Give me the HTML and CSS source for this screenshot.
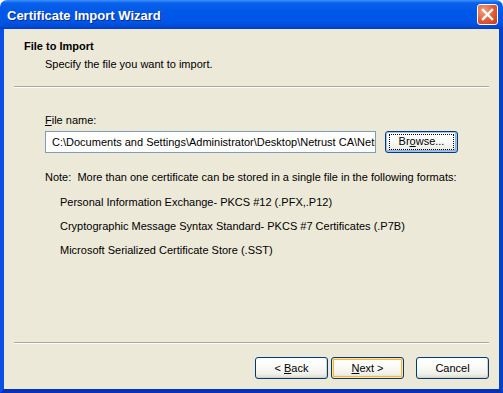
FILE: index.html
```html
<!doctype html>
<html>
  <head>
    <title>Certificate Import Wizard</title>
    <link rel="stylesheet" href="styles.css">
  </head>
  <body>
    <div class="window">
      <div class="titlebar">
        <span class="title">Certificate Import Wizard</span>
        <button class="close" aria-label="Close">
          <svg width="13" height="13" viewBox="0 0 13 13">
            <path d="M2 2 L11 11 M11 2 L2 11" stroke="#fff" stroke-width="2.4" stroke-linecap="square"/>
          </svg>
        </button>
      </div>
      <div class="frame">
        <div class="header">
          <div class="heading">File to Import</div>
          <div class="subheading">Specify the file you want to import.</div>
        </div>
        <div class="rule"></div>
        <div class="content">
          <label class="field-label" for="file"><u>F</u>ile name:</label>
          <div class="file-row">
            <input id="file" class="file-input" type="text" value="C:\Documents and Settings\Administrator\Desktop\Netrust CA\Netrust.pfx">
            <button class="btn btn-default"><span class="focus">Br<u>o</u>wse...</span></button>
          </div>
          <p class="note">Note:&nbsp; More than one certificate can be stored in a single file in the following formats:</p>
          <ul class="formats">
            <li>Personal Information Exchange- PKCS #12 (.PFX,.P12)</li>
            <li>Cryptographic Message Syntax Standard- PKCS #7 Certificates (.P7B)</li>
            <li>Microsoft Serialized Certificate Store (.SST)</li>
          </ul>
        </div>
        <div class="rule"></div>
        <div class="actions">
          <button class="btn">&lt; <u>B</u>ack</button>
          <button class="btn btn-hot"><u>N</u>ext &gt;</button>
          <button class="btn btn-cancel">Cancel</button>
        </div>
      </div>
    </div>
  </body>
</html>
```

FILE: styles.css
```css
html {
  box-sizing: border-box;
}
*, *::before, *::after {
  box-sizing: inherit;
}
body {
  margin: 0;
  background: #fff;
  font-family: "Liberation Sans", Arial, sans-serif;
  font-size: 11px;
  color: #000;
}
.window {
  width: 503px;
  height: 393px;
  display: flex;
  flex-direction: column;
  border-radius: 7px 7px 0 0;
  overflow: hidden;
}
.titlebar {
  height: 29px;
  flex: none;
  display: flex;
  align-items: center;
  justify-content: space-between;
  padding: 0 5px 0 7px;
  background: linear-gradient(#3d95ff 0, #0a60ea 3px, #0058e8 12px, #0055e5 22px, #0049d6 27px, #003dc4 29px);
}
.title {
  color: #fff;
  font-weight: bold;
  font-size: 13px;
  text-shadow: 1px 1px #0b2a8c;
  padding-top: 1px;
}
.close {
  width: 21px;
  height: 21px;
  padding: 0;
  display: flex;
  align-items: center;
  justify-content: center;
  border: 1px solid #fff;
  border-radius: 3px;
  background: radial-gradient(circle at 30% 30%, #f0a080, #e05a34 55%, #c43d19);
}
.frame {
  flex: 1;
  display: flex;
  flex-direction: column;
  background: #ece9d8;
  border: 4px solid #0b4fe0;
  border-top: 0;
  border-left-color: #0a50e4;
  border-right-color: #0641c9;
  border-bottom-color: #0633b5;
}
.header {
  height: 57px;
  padding: 10px 0 0 20px;
}
.heading {
  font-weight: bold;
  line-height: 14px;
}
.subheading {
  margin-top: 4px;
  padding-left: 21px;
  line-height: 14px;
}
.rule {
  height: 2px;
  margin: 0 10px;
  border-top: 1px solid #aca899;
  border-bottom: 1px solid #fff;
}
.content {
  flex: 1;
  padding: 25px 0 0 41px;
}
.field-label {
  display: block;
  line-height: 14px;
}
.file-row {
  display: flex;
  align-items: center;
  margin-top: 4px;
}
.file-input {
  width: 331px;
  height: 22px;
  border: 1px solid #7f9db9;
  background: #fff;
  padding: 0 0 0 6px;
  font: inherit;
  color: #000;
}
.btn {
  width: 73px;
  height: 22px;
  padding: 0;
  font: inherit;
  color: #000;
  border: 1px solid #003c74;
  border-radius: 3px;
  background: linear-gradient(#fff 0, #fbfbf9 40%, #f0f0ea 80%, #dcdad0 100%);
  box-shadow: inset -1px -1px #d6d0c5;
}
.btn-default {
  margin-left: 9px;
  border-color: #003c74;
  box-shadow: inset 0 0 0 1px #a5c3f0, inset -2px -2px #8db2e3;
  display: flex;
  align-items: center;
  justify-content: center;
}
.focus {
  display: block;
  width: 63px;
  height: 14px;
  line-height: 13px;
  outline: 1px dotted #000;
}
.note {
  margin: 17px 0 0;
  line-height: 14px;
}
.formats {
  list-style: none;
  margin: 11px 0 0;
  padding: 0 0 0 15px;
}
.formats li {
  line-height: 14px;
  margin-bottom: 10px;
}
.actions {
  height: 45px;
  display: flex;
  justify-content: flex-end;
  align-items: flex-start;
  padding: 13px 10px 0 0;
}
.btn-hot {
  margin-left: 3px;
  box-shadow: inset 0 0 0 1px #fde4a7, inset 0 0 0 2px #f8b33a;
}
.btn-cancel {
  margin-left: 12px;
}
```
